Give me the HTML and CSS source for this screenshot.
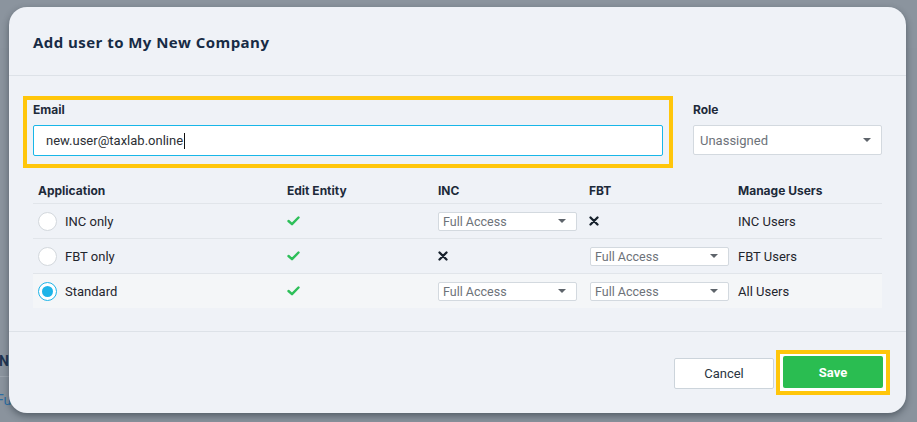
FILE: index.html
```html
<!DOCTYPE html>
<html lang="en">
<head>
<meta charset="utf-8">
<title>Add user</title>
<link rel="stylesheet" href="styles.css">
</head>
<body>
<div class="backdrop">
  <div class="bg-band"></div>
  <div class="bg-n">N</div>
  <div class="bg-line"></div>
  <div class="bg-fu">Fu</div>
</div>
<div class="modal">
  <div class="modal-header">
    <h1 class="modal-title">Add user to My New Company</h1>
  </div>
  <div class="modal-body">
    <div class="top-row">
      <div class="email-field highlight">
        <label class="field-label">Email</label>
        <div class="input focused">new.user@taxlab.online<span class="caret"></span></div>
      </div>
      <div class="role-field">
        <label class="field-label">Role</label>
        <div class="select big"><span class="placeholder">Unassigned</span><span class="tri"></span></div>
      </div>
    </div>
    <div class="table">
      <div class="tr th">
        <div class="c c1">Application</div>
        <div class="c c2">Edit Entity</div>
        <div class="c c3">INC</div>
        <div class="c c4">FBT</div>
        <div class="c c5">Manage Users</div>
      </div>
      <div class="tr">
        <div class="c c1"><span class="radio"></span>INC only</div>
        <div class="c c2"><svg class="check" viewBox="0 0 13 10"><polyline points="1.5,5 5,8.2 11.5,1.5"/></svg></div>
        <div class="c c3"><div class="select small"><span>Full Access</span><span class="tri"></span></div></div>
        <div class="c c4"><svg class="xmark" viewBox="0 0 10 10"><path d="M1.5 1.5 L8.5 8.5 M8.5 1.5 L1.5 8.5"/></svg></div>
        <div class="c c5">INC Users</div>
      </div>
      <div class="tr">
        <div class="c c1"><span class="radio"></span>FBT only</div>
        <div class="c c2"><svg class="check" viewBox="0 0 13 10"><polyline points="1.5,5 5,8.2 11.5,1.5"/></svg></div>
        <div class="c c3"><svg class="xmark" viewBox="0 0 10 10"><path d="M1.5 1.5 L8.5 8.5 M8.5 1.5 L1.5 8.5"/></svg></div>
        <div class="c c4"><div class="select small"><span>Full Access</span><span class="tri"></span></div></div>
        <div class="c c5">FBT Users</div>
      </div>
      <div class="tr selected">
        <div class="c c1"><span class="radio on"></span>Standard</div>
        <div class="c c2"><svg class="check" viewBox="0 0 13 10"><polyline points="1.5,5 5,8.2 11.5,1.5"/></svg></div>
        <div class="c c3"><div class="select small"><span>Full Access</span><span class="tri"></span></div></div>
        <div class="c c4"><div class="select small"><span>Full Access</span><span class="tri"></span></div></div>
        <div class="c c5">All Users</div>
      </div>
    </div>
  </div>
  <div class="modal-footer">
    <button class="btn cancel">Cancel</button>
    <div class="save-frame highlight"><button class="btn save">Save</button></div>
  </div>
</div>
</body>
</html>
```

FILE: styles.css
```css
html, body {
  margin: 0;
  padding: 0;
}
body {
  width: 917px;
  height: 422px;
  overflow: hidden;
  background: #8a939d;
  font-family: Roboto, "Liberation Sans", sans-serif;
  position: relative;
}
.backdrop {
  position: absolute;
  inset: 0;
}
.bg-band {
  height: 48px;
  background: #8b949e;
}
.bg-n {
  position: absolute;
  left: -1px;
  top: 353px;
  font-size: 14px;
  font-weight: 700;
  color: #1f3550;
}
.bg-line {
  position: absolute;
  left: 0;
  top: 376px;
  width: 20px;
  height: 1px;
  background: #9aa2ab;
}
.bg-fu {
  position: absolute;
  left: -4px;
  top: 392px;
  font-size: 14px;
  color: #2d6ea3;
}
.modal {
  position: absolute;
  left: 9px;
  top: 7px;
  width: 897px;
  height: 406px;
  background: #eff2f7;
  border-radius: 18px;
  box-shadow: 0 3px 7px rgba(20, 30, 40, 0.45);
  display: flex;
  flex-direction: column;
}
.modal-header {
  height: 69px;
  box-sizing: border-box;
  border-bottom: 1px solid #dde2e8;
  padding: 25px 24px 0;
}
.modal-title {
  margin: 0;
  font-family: "Open Sans", sans-serif;
  font-weight: 700;
  font-size: 15px;
  line-height: 20px;
  color: #172b45;
  letter-spacing: 0.45px;
}
.modal-body {
  padding: 20px 24px 0 14px;
  height: 256px;
  box-sizing: border-box;
  border-bottom: 1px solid #dde2e8;
}
.top-row {
  display: flex;
  gap: 20px;
}
.highlight {
  border: 4px solid #ffc60b;
}
.email-field {
  width: 650px;
  box-sizing: border-box;
  padding: 2px 6px 8px 6px;
}
.role-field {
  width: 189px;
  padding-top: 6px;
}
.field-label {
  display: block;
  font-family: Inter, sans-serif;
  font-size: 12px;
  font-weight: 700;
  color: #1d2a3a;
  line-height: 15px;
  margin-bottom: 8px;
}
.input {
  height: 31px;
  box-sizing: border-box;
  background: #fff;
  border: 1px solid #18b6e8;
  border-radius: 2px;
  padding: 0 12px;
  font-size: 13px;
  line-height: 29px;
  color: #2b2f35;
  display: flex;
  align-items: center;
}
.caret {
  display: inline-block;
  width: 1px;
  height: 16px;
  background: #111;
  margin-left: 1px;
}
.select {
  background: #fff;
  border: 1px solid #d3d9df;
  border-radius: 2px;
  box-sizing: border-box;
  display: flex;
  align-items: center;
  justify-content: space-between;
  color: #6d7279;
}
.select.big {
  height: 30px;
  padding: 0 10px 0 6px;
  font-size: 13px;
}
.select.small {
  height: 19px;
  width: 139px;
  padding: 0 10px 0 4px;
  font-size: 12.5px;
}
.tri {
  width: 0;
  height: 0;
  border-left: 4px solid transparent;
  border-right: 4px solid transparent;
  border-top: 4px solid #5e646b;
}
.table {
  margin: 13px 0 0 10px;
  width: 849px;
}
.tr {
  display: flex;
  height: 35px;
  align-items: center;
  border-top: 1px solid #e1e5ea;
  box-sizing: border-box;
  font-size: 13px;
  color: #1f252d;
}
.tr.th {
  height: 22px;
  border-top: none;
  font-family: Inter, sans-serif;
  font-weight: 700;
  font-size: 12px;
  color: #1d2a3a;
  align-items: flex-start;
  padding-top: 2px;
}
.tr.selected {
  background: #f4f6f8;
}
.c {
  display: flex;
  align-items: center;
  padding-left: 5px;
  box-sizing: border-box;
}
.c1 { width: 249px; }
.c2 { width: 151px; }
.c3 { width: 151px; }
.c4 { width: 149px; }
.c5 { width: 149px; }
.tr:not(.th) .c4 .select { margin-left: 1px; }
.radio {
  width: 19px;
  height: 19px;
  border-radius: 50%;
  border: 1px solid #d3d8dd;
  background: #fff;
  margin-right: 8px;
  box-sizing: border-box;
  display: flex;
  align-items: center;
  justify-content: center;
}
.radio.on {
  border: 1.5px solid #1db4e8;
}
.radio.on::after {
  content: "";
  width: 11px;
  height: 11px;
  border-radius: 50%;
  background: #1db4e8;
}
.check {
  width: 13px;
  height: 10px;
  fill: none;
  stroke: #2dbf59;
  stroke-width: 2.4;
  stroke-linecap: round;
  stroke-linejoin: round;
}
.xmark {
  width: 10px;
  height: 10px;
  stroke: #17212c;
  stroke-width: 2.3;
  stroke-linecap: round;
}
.modal-footer {
  display: flex;
  justify-content: flex-end;
  align-items: center;
  gap: 2px;
  padding: 18px 16px 0 0;
}
.btn {
  font-family: Roboto, "Liberation Sans", sans-serif;
  font-size: 13px;
  border-radius: 2px;
  cursor: pointer;
}
.cancel {
  width: 100px;
  height: 31px;
  background: #fff;
  border: 1px solid #ccd4db;
  color: #2a3441;
  margin-top: 1px;
}
.save-frame {
  padding: 2px 3px 3px 3px;
  background: #fff;
  display: flex;
}
.save {
  width: 100px;
  height: 32px;
  background: #2abd51;
  border: none;
  color: #fff;
  font-weight: 700;
}
```
